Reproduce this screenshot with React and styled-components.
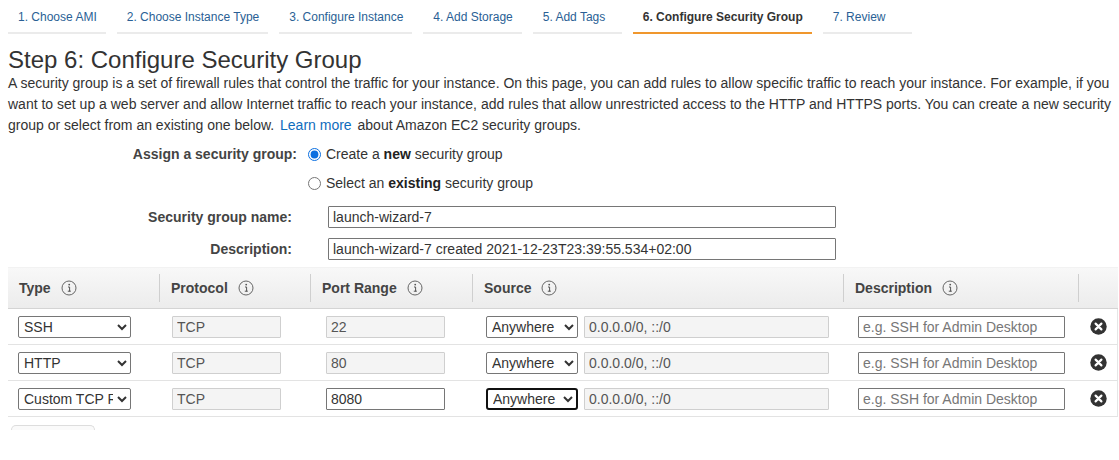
// Libraries
import React from 'react'
import styled, { createGlobalStyle } from 'styled-components'

// Data
const steps = [
  '1. Choose AMI',
  '2. Choose Instance Type',
  '3. Configure Instance',
  '4. Add Storage',
  '5. Add Tags',
  '6. Configure Security Group',
  '7. Review',
]

const columns = ['Type', 'Protocol', 'Port Range', 'Source', 'Description']

const rules = [
  { type: 'SSH', port: '22', portEditable: false },
  { type: 'HTTP', port: '80', portEditable: false },
  { type: 'Custom TCP Rule', port: '8080', portEditable: true, focused: true },
]

// Icons
const InfoIcon = () => (
  <svg width="16" height="16" viewBox="0 0 16 16">
    <circle cx="8" cy="8" r="7" fill="none" stroke="#666" strokeWidth="1" />
    <circle cx="8.2" cy="4.6" r="0.9" fill="#555" />
    <path d="M7 7h1.6v4.2h0.8M6.8 11.2h2.8" fill="none" stroke="#555" strokeWidth="1" />
  </svg>
)

const RemoveIcon = () => (
  <svg width="17" height="17" viewBox="0 0 17 17">
    <circle cx="8.5" cy="8.5" r="8.2" fill="#333" />
    <path d="M5.6 5.6l5.8 5.8M11.4 5.6l-5.8 5.8" stroke="#fff" strokeWidth="2.2" strokeLinecap="round" />
  </svg>
)

// App
const App = () => (
  <>
    <GlobalStyle />
    <Page>
      <Tabs>
        {steps.map((s, i) => (
          <Tab key={s} active={i === 5}>{s}</Tab>
        ))}
      </Tabs>

      <Title>Step 6: Configure Security Group</Title>
      <Intro>
        A security group is a set of firewall rules that control the traffic for your instance. On this page, you can add
        rules to allow specific traffic to reach your instance. For example, if you want to set up a web server and allow
        Internet traffic to reach your instance, add rules that allow unrestricted access to the HTTP and HTTPS ports. You
        can create a new security group or select from an existing one below. <Link>Learn more</Link> about Amazon EC2
        security groups.
      </Intro>

      <Form>
        <Label>Assign a security group:</Label>
        <RadioOption>
          <Radio type="radio" name="sg" defaultChecked />
          <span>Create a <b>new</b> security group</span>
        </RadioOption>
        <Label />
        <RadioOption>
          <Radio type="radio" name="sg" />
          <span>Select an <b>existing</b> security group</span>
        </RadioOption>
        <Label inset>Security group name:</Label>
        <FieldWrap>
          <TextField defaultValue="launch-wizard-7" />
        </FieldWrap>
        <Label inset>Description:</Label>
        <FieldWrap>
          <TextField defaultValue="launch-wizard-7 created 2021-12-23T23:39:55.534+02:00" />
        </FieldWrap>
      </Form>

      <Table>
        <HeaderRow>
          {columns.map((c, i) => (
            <HeaderCell key={c} divider={i > 0}>
              {c}
              <InfoIcon />
            </HeaderCell>
          ))}
          <HeaderCell divider />
        </HeaderRow>

        {rules.map(r => (
          <Row key={r.type}>
            <Cell pad={10}>
              <Select width={113} defaultValue={r.type}>
                <option>{r.type}</option>
              </Select>
            </Cell>
            <Cell pad={13}>
              <CellInput width={109} disabled defaultValue="TCP" />
            </Cell>
            <Cell pad={16}>
              <CellInput width={119} disabled={!r.portEditable} defaultValue={r.port} />
            </Cell>
            <Cell pad={14}>
              <Select width={92} focused={r.focused} defaultValue="Anywhere">
                <option>Anywhere</option>
              </Select>
              <CellInput width={245} disabled defaultValue="0.0.0.0/0, ::/0" />
            </Cell>
            <Cell pad={15}>
              <CellInput width={207} placeholder="e.g. SSH for Admin Desktop" />
            </Cell>
            <Action>
              <RemoveIcon />
            </Action>
          </Row>
        ))}
      </Table>

      <AddRule />
    </Page>
  </>
)

// Styles
const GlobalStyle = createGlobalStyle`
  html, body {
    margin: 0;
    padding: 0;
    overflow: hidden;
    background: #fff;
  }
  body {
    font-family: "Liberation Sans", Arial, sans-serif;
    color: #333;
  }
`

const Page = styled.div`
  padding: 0 8px;
  width: 1103px;
`

const Tabs = styled.div`
  display: flex;
  gap: 11px;
`

const Tab = styled.div`
  box-sizing: border-box;
  min-width: 89px;
  padding: 9px 9px 7px 10px;
  line-height: 16px;
  font-size: 12px;
  white-space: nowrap;
  color: ${p => (p.active ? '#333' : '#2a5f95')};
  font-weight: ${p => (p.active ? 'bold' : 'normal')};
  border-bottom: 2px solid ${p => (p.active ? '#f0972d' : '#ebebeb')};
`

const Title = styled.h1`
  margin: 12px 0 0;
  font-size: 24px;
  line-height: 27px;
  font-weight: normal;
  color: #333;
`

const Intro = styled.p`
  margin: 0;
  font-size: 14px;
  line-height: 21px;
  color: #333;
`

const Link = styled.a`
  display: inline-block;
  color: #0f6cbd;
  margin: 0 2px;
  cursor: pointer;
`

const Form = styled.div`
  display: grid;
  grid-template-columns: 289px 1fr;
  grid-template-rows: 28px 30px 38px 26px;
  column-gap: 11px;
  margin-top: 4px;
  font-size: 14px;
`

const Label = styled.div`
  display: flex;
  align-items: center;
  justify-content: flex-end;
  padding-right: ${p => (p.inset ? '5px' : '0')};
  font-weight: bold;
  color: #444;
`

const RadioOption = styled.label`
  display: flex;
  align-items: center;
  gap: 5px;
  color: #333;

  b {
    color: #222;
  }
`

const Radio = styled.input`
  margin: 0;
  width: 13px;
  height: 13px;
  accent-color: #0b6fe0;
`

const FieldWrap = styled.div`
  display: flex;
  align-items: center;
  padding-left: 20px;
`

const TextField = styled.input`
  box-sizing: border-box;
  width: 508px;
  height: 22px;
  padding: 0 4px;
  border: 1px solid #767676;
  border-radius: 1px;
  font: 14px "Liberation Sans", Arial, sans-serif;
  color: #333;
  outline: none;
`

const Table = styled.div`
  width: 1110px;
  margin-top: 5px;
`

const grid = `
  display: grid;
  grid-template-columns: 151px 151px 162px 371px 235px 40px;
`

const HeaderRow = styled.div`
  ${grid}
  height: 42px;
  background: linear-gradient(#f8f8f8, #ececec);
  border-bottom: 1px solid #d4d4d4;
  border-top: 1px solid #f2f2f2;
  box-sizing: border-box;
`

const HeaderCell = styled.div`
  align-self: center;
  display: flex;
  align-items: center;
  gap: 10px;
  height: 28px;
  padding-left: 11px;
  border-left: ${p => (p.divider ? '1px solid #cfcfcf' : 'none')};
  font-size: 14px;
  font-weight: bold;
  color: #444;
`

const Row = styled.div`
  ${grid}
  height: 36px;
  border-bottom: 1px solid #e3e3e3;
  border-right: 1px solid #e6e6e6;
  box-sizing: border-box;
`

const Cell = styled.div`
  display: flex;
  align-items: center;
  gap: 6px;
  padding-left: ${p => p.pad}px;
`

const Select = styled.select`
  box-sizing: border-box;
  width: ${p => p.width}px;
  height: 22px;
  padding: 0 1px;
  border: ${p => (p.focused ? '2px solid #111' : '1px solid #767676')};
  border-radius: ${p => (p.focused ? '3px' : '2px')};
  background: #fff;
  font: 14px "Liberation Sans", Arial, sans-serif;
  color: #333;
  outline: none;
`

const CellInput = styled.input`
  box-sizing: border-box;
  width: ${p => p.width}px;
  height: 22px;
  padding: 0 4px;
  border: 1px solid #767676;
  border-radius: 1px;
  background: #fff;
  font: 14px "Liberation Sans", Arial, sans-serif;
  color: #333;
  outline: none;

  &:disabled {
    background: #f4f4f4;
    border-color: #cfcfcf;
    color: #555;
  }

  &::placeholder {
    color: #777;
  }
`

const Action = styled.div`
  display: flex;
  align-items: center;
  justify-content: center;

  svg {
    display: block;
  }
`

const AddRule = styled.div`
  width: 82px;
  height: 4px;
  margin: 8px 0 0 3px;
  border: 1px solid #ddd;
  border-bottom: none;
  border-radius: 5px 5px 0 0;
  background: #fafafa;
`

export default App
